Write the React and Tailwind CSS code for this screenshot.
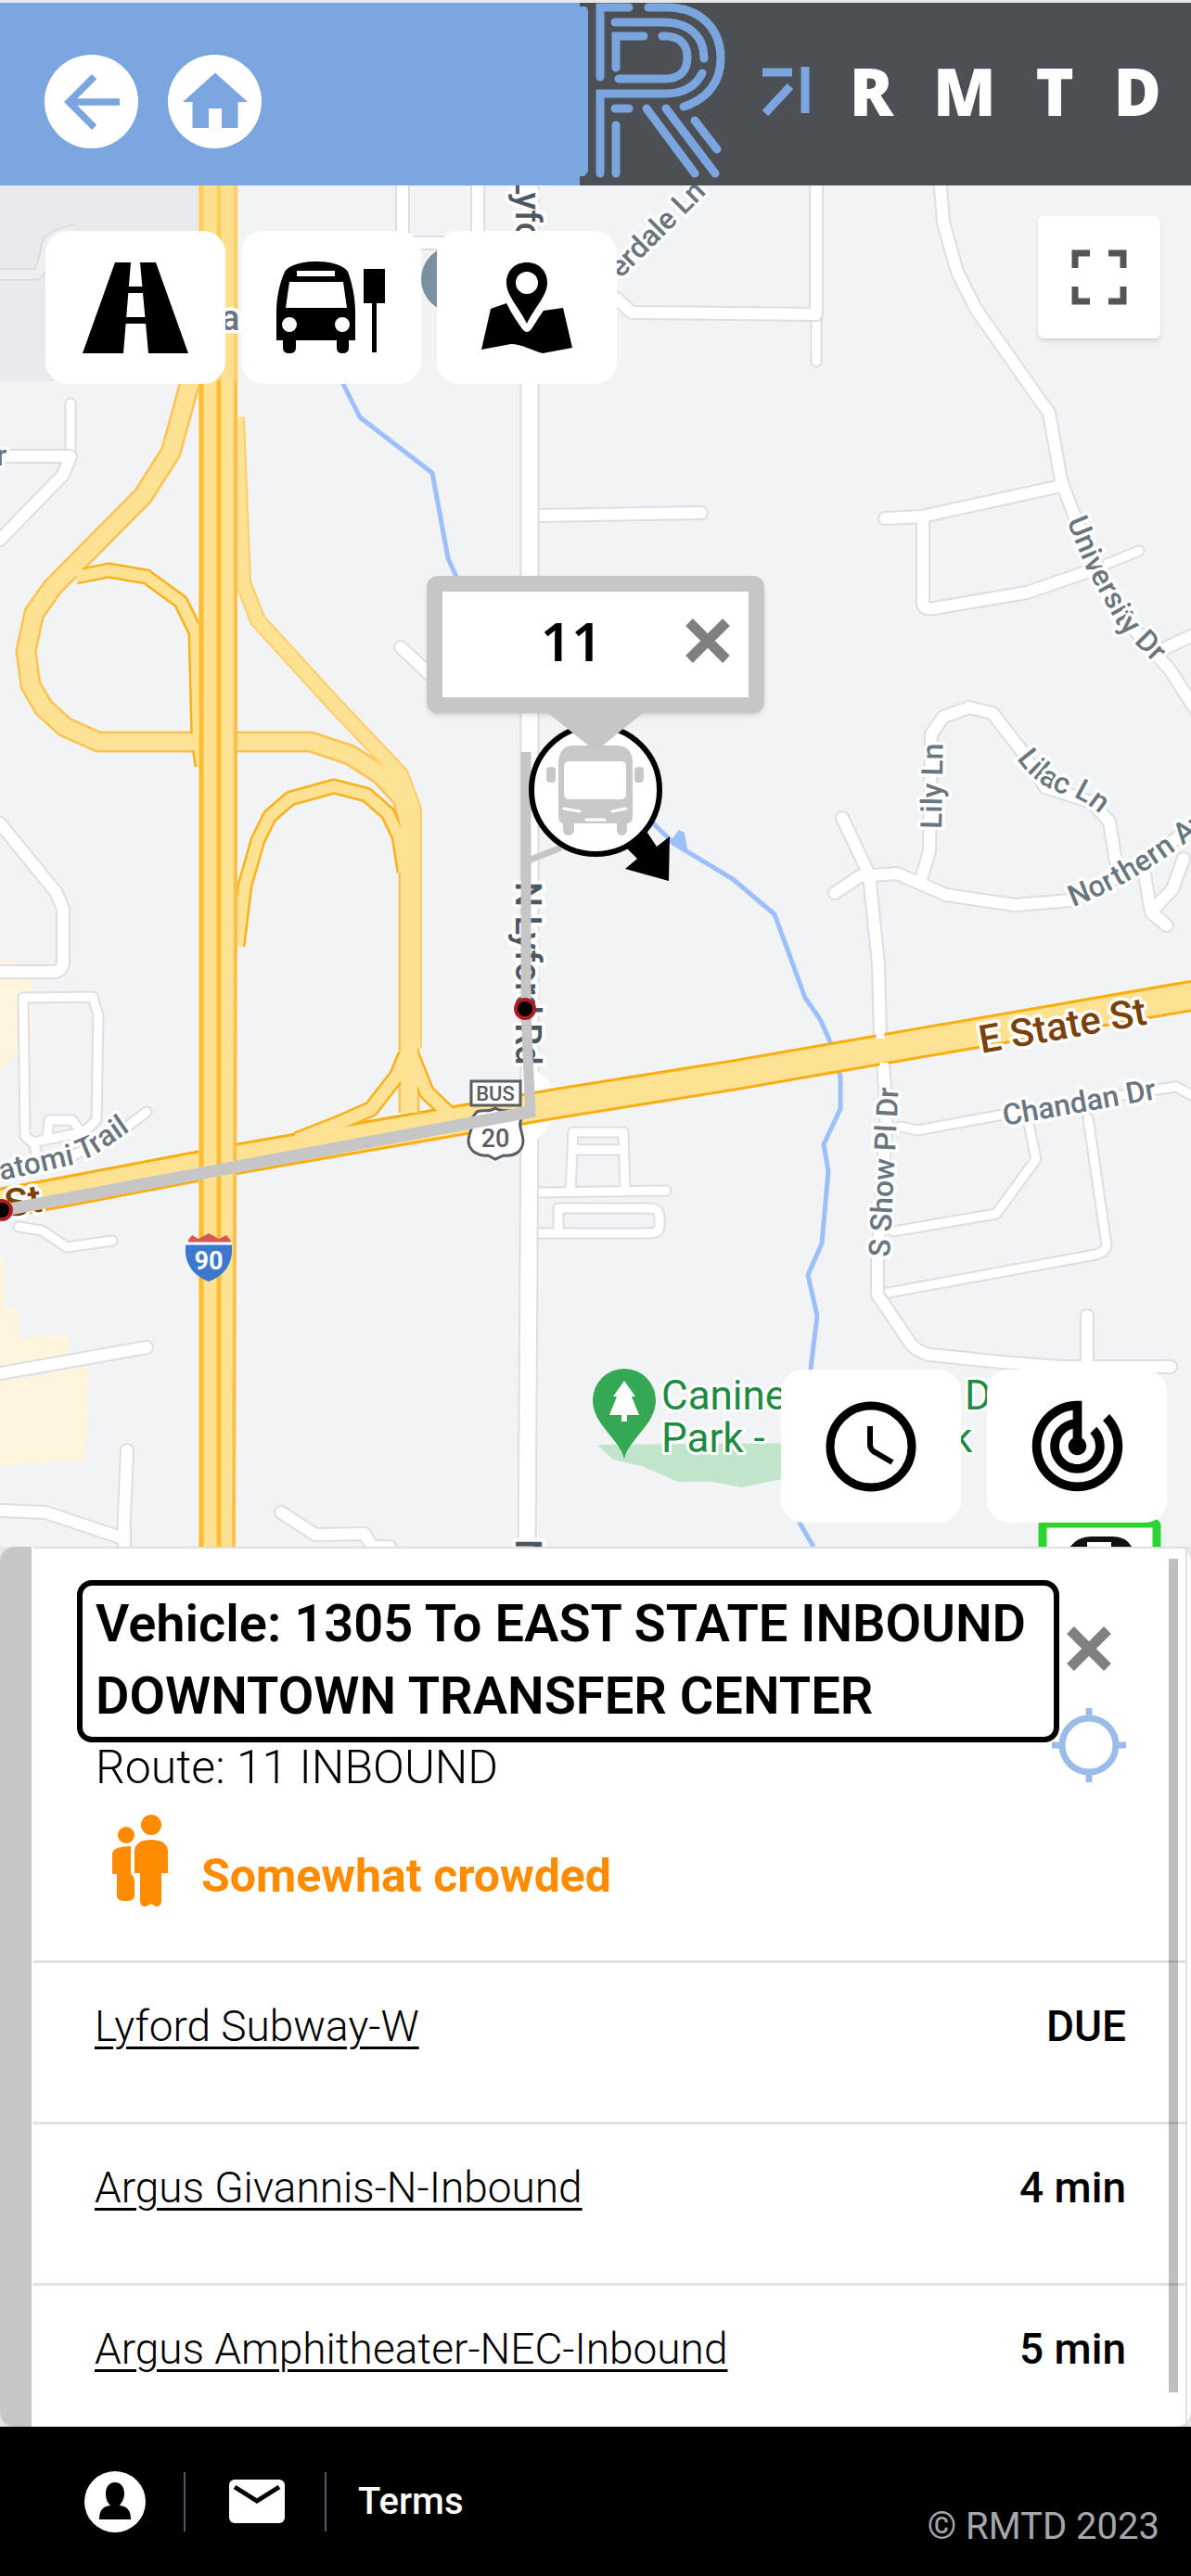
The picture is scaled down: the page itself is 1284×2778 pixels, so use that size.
import React, { useState } from "react";
import { MdArrowBack, MdHome, MdTrackChanges } from "react-icons/md";

const STOPS = [
  { id: 1, name: "Lyford Subway-W", eta: "DUE" },
  { id: 2, name: "Argus Givannis-N-Inbound", eta: "4 min" },
  { id: 3, name: "Argus Amphitheater-NEC-Inbound", eta: "5 min" }
];

// Local streets, widest first
const WIDE_ROADS = [
  "M571 190V1190L568 1680"
];

const LOCAL_ROADS = [
  "M1013 190L1017 240L1032 293L1052 333L1120 430L1131 445L1144 518L1157 553L1206 660L1261 722L1290 767",
  "M954 559L994 557L1144 524",
  "M995 559V650Q995 658 1007 656L1107 639L1174 616",
  "M1254 700L1290 683",
  "M994 945L1002 918L1004 792L1017 773L1045 763L1070 769L1100 808L1127 849L1177 865L1196 886L1204 935",
  "M900 963L927 945L967 942L1020 965L1094 976L1154 971L1227 935L1290 888",
  "M908 882L937 943L947 1040L949 1120L952 1147L956 1200L946 1360V1396L981 1448Q988 1458 1003 1461L1080 1469L1142 1474H1262",
  "M1234 943L1241 984L1258 998M1276 926L1264 959L1244 980",
  "M1172 1419V1473",
  "M880 190V338M665 322L681 337L880 339",
  "M434 190V254Q434 262 446 262H515M515 190V270",
  "M76 492L68 512L0 582M0 492H76",
  "M0 888L61 963L68 980V1036Q68 1048 57 1048H0",
  "M0 1481L158 1453",
  "M0 1629L49 1631L133 1659L137 1564M134 1650V1680",
  "M303 1631L340 1655L393 1654L401 1668H420",
  "M432 698L463 727",
  "M579 556L756 553"
];

const THIN_ROADS = [
  "M76 435V492",
  "M1174 616L1228 594",
  "M880 338V390",
  "M971 1215L989 1219L1081 1202L1247 1175L1268 1172L1290 1184",
  "M1109 1212L1117 1250L1074 1309L963 1328",
  "M1173 1206L1193 1343Q1192 1350 1181 1353L947 1396",
  "M615 1284L618 1221H672L674 1284M617 1240H672M577 1286L718 1284",
  "M602 1330V1303H700Q711 1303 711 1312V1322Q711 1330 700 1330H577",
  "M27 1225L25 1076L100 1075L106 1095L104 1208L90 1221L35 1232Z",
  "M51 1225L53 1208H78L88 1222",
  "M0 1262L78 1246L120 1228L158 1199",
  "M20 1323L45 1327L72 1345L121 1338",
  "M36 1232L40 1245",
  "M442 1210L447 1230"
];

const RAMPS = [
  { d: "M207 405L184 488L154 535L57 633L37 661L28 702L33 739L47 763L70 784L106 800H335L377 814L410 835L434 861L441 890V1200", fill: 18, edge: 23, color: "#fac352" },
  { d: "M82 622L117 615L158 622L195 649L211 682L214 800L218 826", fill: 12, edge: 17, color: "#f9b11c" },
  { d: "M255 450L262 628L278 669L360 759L432 835L446 873V1130", fill: 14, edge: 18, color: "#fbce69" },
  { d: "M256 1020L264 955L278 906L291 880L313 861L360 848L395 857L418 877L430 902L436 940", fill: 12, edge: 17, color: "#f9b11c" },
  { d: "M437 1138L428 1160L400 1196L368 1210L320 1229", fill: 13, edge: 18, color: "#f9b11c" },
  { d: "M444 1138L460 1178L485 1202", fill: 13, edge: 18, color: "#f9b11c" }
];

const STATE_ST = "M-6 1299L65 1286L254 1250L600 1190L788 1160L949 1132L1290 1073";

const Roads = ({ paths, width }) => (
  <g fill="none" strokeLinecap="round" strokeLinejoin="round">
    {paths.map((d) => (
      <path key={d} d={d} stroke="#dcdee3" strokeWidth={width + 4} />
    ))}
    {paths.map((d) => (
      <path key={d} d={d} stroke="#ffffff" strokeWidth={width} />
    ))}
  </g>
);

const CityMap = () => (
  <svg
    className="absolute inset-0 h-full w-full"
    viewBox="0 200 1284 1468"
    preserveAspectRatio="xMidYMin slice"
    fontFamily="Roboto, sans-serif"
    role="img"
    aria-label="Map around E State St and N Lyford Rd"
  >
    <rect x="0" y="200" width="1284" height="1500" fill="#f1f3f5" />
    <path d="M0 200H214V411H0Z" fill="#e8eaed" />
    <g fill="#fef5dc">
      <path d="M0 1036L14 1036L35 1063V1119L0 1154Z" />
      <path d="M0 1355L4 1355V1410H20V1444L74 1438V1462L0 1478Z" />
      <path d="M0 1490L96 1473L92 1575L33 1579L0 1581Z" />
    </g>
    <path d="M644 1558L910 1556V1590L843 1595L799 1604L768 1598L731 1598L692 1581L661 1574Z" fill="#c1e5ca" />

    <g fill="none" stroke="#9cc0fa" strokeWidth="5" strokeLinejoin="round">
      <path d="M368 410L388 450L466 510L483 602L500 640M700 884L727 910L790 948L835 986L868 1076L884 1099L897 1128L906 1162V1196L888 1234L893 1263L886 1341L871 1375L881 1419L874 1476L862 1642L877 1668" />
    </g>
    <path d="M722 908L732 895L738 898L741 916Z" fill="#9cc0fa" />

    <path d="M0 296H39Q45 296 51 262Q53 254 82 248" fill="none" stroke="#d5d8dc" strokeWidth="13" />
    <path d="M0 296H39Q45 296 51 262Q53 254 82 248" fill="none" stroke="#eceef0" strokeWidth="10" />
    <Roads paths={THIN_ROADS} width={9} />
    <Roads paths={LOCAL_ROADS} width={12} />
    <Roads paths={WIDE_ROADS} width={17} />
    <path d="M579 1155L603 1176L600 1203L577 1232Z" fill="#ffffff" />

    <g fill="none" strokeLinejoin="round">
      <path d={STATE_ST} stroke="#f9ae12" strokeWidth="34" />
      {RAMPS.map((r) => (
        <path key={r.d} d={r.d} stroke={r.color} strokeWidth={r.edge} />
      ))}
      {RAMPS.map((r) => (
        <path key={r.d} d={r.d} stroke="#fde293" strokeWidth={r.fill} />
      ))}
      <path d={STATE_ST} stroke="#fde293" strokeWidth="28" />
    </g>

    {/* Interstate */}
    <path d="M214 200H256V700L253 1668H214Z" fill="#fde293" />
    <path d="M217 200V1668M236 200V1668" stroke="#fcbd35" strokeWidth="5" />
    <path d="M254 200V1000L252 1668" fill="none" stroke="#fac04a" strokeWidth="4" />
    <path d="M214 200H257V411H214Z" fill="#fbdd88" opacity="0.5" />
    <path d="M949 1112V1120M953 1146V1156" stroke="#ffffff" strokeWidth="9" />

    <circle cx="490" cy="301" r="36" fill="#7890a0" />

    {/* Street names */}
    <defs>
      <path id="university" d="M1150 562L1171 613L1206 676L1262 733" />
      <path id="lilac" d="M1096 818Q1118 850 1152 858Q1170 862 1200 890" />
      <path id="northern" d="M1157 978Q1230 950 1300 892" />
      <path id="potawatomi" d="M-42 1282L30 1267L78 1256L102 1246L160 1206" />
    </defs>
    <g fontSize="32" fontWeight="500" fill="#69757f" stroke="#ffffff" strokeWidth="7" strokeLinejoin="round" paintOrder="stroke">
      <text transform="translate(669 301) rotate(-45)">erdale Ln</text>
      <text><textPath href="#university">University Dr</textPath></text>
      <text transform="translate(1015 894) rotate(-89)">Lily Ln</text>
      <text><textPath href="#lilac">Lilac Ln</textPath></text>
      <text><textPath href="#northern">Northern Ave</textPath></text>
      <text transform="translate(1083 1214) rotate(-10)">Chandan Dr</text>
      <text transform="translate(959 1356) rotate(-87)">S Show Pl Dr</text>
      <text><textPath href="#potawatomi" startOffset="44">atomi Trail</textPath></text>
      <text x="-4" y="502">r</text>
      <text x="238" y="356" fontSize="38">a</text>
    </g>
    <g fontSize="38" fontWeight="500" fill="#4d5760" stroke="#ffffff" strokeWidth="8" strokeLinejoin="round" paintOrder="stroke">
      <text transform="translate(556 153) rotate(90)">N Lyford Rd</text>
      <text transform="translate(556 951) rotate(90)">N Lyford Rd</text>
      <text transform="translate(556 1660) rotate(90)">N Lyford Rd</text>
    </g>
    <g fontSize="42" fontWeight="500" fill="#7a4109" stroke="#ffffff" strokeWidth="7" strokeLinejoin="round" paintOrder="stroke">
      <text transform="translate(1058 1136) rotate(-10)">E State St</text>
      <text transform="translate(8 1313) rotate(-10)">St</text>
    </g>
    <g fontSize="44" fill="#1e8a42" stroke="#ffffff" strokeWidth="6" strokeLinejoin="round" paintOrder="stroke">
      <text x="713" y="1520">Canine</text>
      <text x="713" y="1566">Park -</text>
      <text x="1040" y="1520">D</text>
      <text x="1026" y="1566">k</text>
    </g>

    {/* Park marker */}
    <path d="M673 1573C668 1552 639 1536 639 1510A34 34 0 0 1 707 1510C707 1536 678 1552 673 1573Z" fill="#34a853" />
    <path d="M673 1489L685 1506H681L689 1526H676V1533H670V1526H657L665 1506H661Z" fill="#ffffff" />

    {/* Route shields */}
    <path d="M534 1195C528 1200 520 1196 514 1199L508 1207C512 1214 505 1221 505 1231C506 1243 518 1247 526 1246L534 1250L543 1246C554 1247 563 1243 564 1231C564 1221 558 1214 562 1207L555 1199C548 1196 540 1200 534 1195Z" fill="#ffffff" stroke="#595e62" strokeWidth="3" />
    <path d="M203 1337L207 1332L214 1336L225 1330L236 1336L244 1332L249 1338V1340H203Z" fill="#d8565a" />
    <path d="M200 1340H250V1352C248 1368 238 1377 225 1382C212 1377 202 1368 200 1352Z" fill="#3b78ce" />
    <path d="M200 1341H250" stroke="#ffffff" strokeWidth="3" />
    <g textAnchor="middle">
      <text x="534" y="1237" fontSize="27" fontWeight="500" fill="#595e62">20</text>
      <text x="225" y="1369" fontSize="27" fontWeight="700" fill="#ffffff">90</text>
    </g>

    {/* Bus route and its stops */}
    <path d="M567 811V1090L570 1160L572 1198" fill="none" stroke="#c6c6c6" strokeWidth="11" />
    <path d="M567 929L605 914" stroke="#c6c6c6" strokeWidth="7" />
    <path d="M-6 1307L577 1198" stroke="#c6c6c6" strokeWidth="13" />
    <circle cx="566" cy="1088" r="10" fill="#000000" stroke="#b01c22" strokeWidth="4" />
    <circle cx="2" cy="1305" r="10" fill="#000000" stroke="#b01c22" strokeWidth="4" />
    <rect x="508" y="1166" width="53" height="26" fill="#ffffff" stroke="#595e62" strokeWidth="3" />
    <text x="534" y="1187" fontSize="22" fontWeight="500" fill="#595e62" textAnchor="middle">BUS</text>

    {/* Selected vehicle */}
    <path d="M722 902L721 950L674 937L687 926L675 914L696 895L708 913Z" fill="#000000" />
    <circle cx="642" cy="852" r="69" fill="#ffffff" stroke="#000000" strokeWidth="6" />
    <g fill="#c8c8c8">
      <path d="M602 822Q603 804 618 804H665Q681 804 682 822V880Q682 888 676 888V894Q676 901 670 901Q665 901 665 894V888H619V894Q619 901 613 901Q607 901 607 894V888Q602 888 602 880Z" />
      <rect x="589" y="827" width="10" height="17" rx="4" />
      <rect x="684" y="827" width="10" height="17" rx="4" />
    </g>
    <rect x="608" y="821" width="67" height="41" rx="5" fill="#ffffff" />
    <path d="M608 872L625 875M675 872L660 875M632 884H652" stroke="#ffffff" strokeWidth="3" strokeLinecap="round" />

    {/* Stop marker partly under the panel */}
    <rect x="1124" y="1643" width="123" height="120" rx="2" fill="#ffffff" stroke="#2bd52f" strokeWidth="9" />
    <path d="M1151 1700V1672Q1160 1657 1176 1657H1200Q1216 1657 1222 1672V1700Z" fill="#111111" />
    <rect x="1172" y="1663" width="26" height="8" fill="#ffffff" />
  </svg>
);

const RoadIcon = () => (
  <svg className="h-[98px] w-[114px]" viewBox="0 0 114 98" aria-hidden="true">
    <path d="M35 0H52L44 98H0ZM62 0H79L114 98H71Z" />
    <path d="M48 26H66V33H48ZM46 59H68V66H46Z" />
  </svg>
);

const BusStopIcon = () => (
  <svg className="h-[100px] w-[118px]" viewBox="0 0 118 100" aria-hidden="true">
    <path
      fillRule="evenodd"
      d="M43 0C56 0 72 3 77 11C82 24 85 40 85 54V85H78V93Q78 99 71 99Q65 99 65 93V85H21V93Q21 99 14 99Q7 99 7 93V85H0V54C0 40 3 24 9 11C14 3 30 0 43 0ZM22 10V16H63V10ZM14 22L10 50H76L72 22ZM14 60A8 8 0 1 0 14 76A8 8 0 1 0 14 60ZM71 60A8 8 0 1 0 71 76A8 8 0 1 0 71 60Z"
    />
    <path d="M94 8H117V45H94ZM103 45H108V98H103Z" />
  </svg>
);

const MapPinIcon = () => (
  <svg className="h-[98px] w-[100px]" viewBox="0 0 100 98" aria-hidden="true">
    <path
      fillRule="evenodd"
      d="M50 0C63 0 72 9 72 22C72 36 58 49 50 66C42 49 28 36 28 22C28 9 37 0 50 0ZM50 10A12 12 0 1 0 50 34A12 12 0 1 0 50 10Z"
    />
    <path d="M11 50L28 44C34 56 40 65 46 73Q50 77 54 73C59 66 62 60 68 52L89 49L99 92L67 98C56 95 44 88 33 88L1 94Z" />
  </svg>
);

const ClockIcon = () => (
  <svg className="size-[98px]" viewBox="0 0 98 98" fill="none" stroke="#000000" aria-hidden="true">
    <circle cx="49" cy="49" r="44" strokeWidth="9" />
    <path d="M48 27V48Q49 53 53 55L72 66" strokeWidth="6" />
  </svg>
);

const CloseIcon = () => (
  <svg className="size-12" viewBox="0 0 48 48" stroke="#808080" strokeWidth="11" aria-hidden="true">
    <path d="M4 4L44 44M44 4L4 44" />
  </svg>
);

const LocateIcon = () => (
  <svg className="size-20" viewBox="0 0 80 80" fill="none" stroke="#9bbbe8" strokeWidth="7" aria-hidden="true">
    <circle cx="40" cy="40" r="29" />
    <path d="M40 0V11M40 69V80M0 40H11M69 40H80" />
  </svg>
);

const PeopleIcon = () => (
  <svg className="h-[100px] w-[60px]" viewBox="0 0 60 100" fill="#ff8c00" aria-hidden="true">
    <circle cx="15" cy="22" r="9" />
    <path d="M0 42Q1 34 20 34V64Q24 66 24 72V88Q24 93 14 93Q5 93 5 88V64H0Z" />
    <circle cx="42" cy="11" r="11" />
    <path d="M24 38Q26 27 42 27Q58 27 60 38V63H53V93Q53 99 47 99L42 96L36 99Q30 99 30 93V63H24Z" />
  </svg>
);

const UserIcon = () => (
  <svg className="size-[66px]" viewBox="0 0 66 66" aria-hidden="true">
    <circle cx="33" cy="33" r="33" fill="#ffffff" />
    <path d="M33 12C40 12 43 18 43 24C43 30 40 34 38 37C46 38 50 42 50 52H16C16 42 20 38 28 37C25 34 23 30 23 24C23 18 26 12 33 12Z" fill="#000000" />
  </svg>
);

const MailIcon = () => (
  <svg className="h-[47px] w-[60px]" viewBox="0 0 60 47" aria-hidden="true">
    <rect width="60" height="47" rx="6" fill="#ffffff" />
    <path d="M6 8L30 23L54 8" fill="none" stroke="#000000" strokeWidth="5" />
  </svg>
);

const LogoMark = () => (
  <svg className="h-[197px] w-[160px] shrink-0" viewBox="0 0 160 197" fill="none" stroke="#7ba5de" strokeWidth="9" aria-hidden="true">
    <path d="M0 4L7 4L9 8V182L5 187H0Z" fill="#7ba5de" stroke="none" />
    <g strokeLinejoin="miter" strokeLinecap="round">
      <path d="M22 80V5H53M74 5H94C130 5 152 28 152 60C152 86 137 104 112 112" />
      <path d="M38 21H90C118 21 134 36 134 60" />
      <path d="M39 70V36H69M89 36H92C108 36 116 45 116 59C116 73 108 82 92 82H42" />
      <path d="M132 76C125 90 113 98 92 98H22V184" />
      <path d="M38 114H53M39 132V184M72 114L124 184M93 114L146 184M124 127L148 158" />
    </g>
  </svg>
);

const LogoArrow = () => (
  <svg className="h-[54px] w-[52px] shrink-0" viewBox="0 0 52 54" fill="none" stroke="#7ba5de" strokeWidth="9" aria-hidden="true">
    <path d="M1 7H33M47 1V51M4 51L31 22" />
  </svg>
);

const MapButton = ({ label, children }) => (
  <button
    type="button"
    aria-label={label}
    className="flex h-[165px] w-[194px] items-center justify-center rounded-3xl bg-white"
  >
    {children}
  </button>
);

const Header = () => (
  <header className="mt-[3px] flex h-[197px] items-center justify-between bg-[#7ba5de]">
    <nav className="flex gap-8 pl-12 pt-4">
      <button type="button" aria-label="Back" className="flex size-[101px] items-center justify-center rounded-full bg-white">
        <MdArrowBack className="size-[90px] text-[#7ba5de]" />
      </button>
      <button type="button" aria-label="Home" className="flex size-[101px] items-center justify-center rounded-full bg-white">
        <MdHome className="size-[84px] text-[#7ba5de]" />
      </button>
    </nav>
    <div className="flex h-full w-[659px] items-center bg-[#4c4f54]">
      <LogoMark />
      <div className="flex flex-1 items-center justify-between pr-8 pb-2 pl-9">
        <LogoArrow />
        {["R", "M", "T", "D"].map((letter) => (
          <span key={letter} className="font-['Open_Sans',sans-serif] text-[70px] leading-none font-extrabold text-white">
            {letter}
          </span>
        ))}
      </div>
    </div>
  </header>
);

const VehiclePopup = ({ route, onClose }) => (
  <div className="absolute top-[421px] left-1/2 -ml-[182px] w-[364px]">
    <div className="rounded-xl bg-[#c6c6c6] px-[17px] py-[17px] shadow-md">
      <div className="flex h-[114px] items-center bg-white pb-2">
        <span className="flex-1 pl-4 text-center font-['Noto_Sans',sans-serif] text-[58px] leading-none font-semibold text-black">{route}</span>
        <button type="button" aria-label="Close popup" onClick={onClose} className="mr-5">
          <CloseIcon />
        </button>
      </div>
    </div>
    <svg className="mx-auto h-10 w-[102px]" viewBox="0 0 102 40" aria-hidden="true">
      <path d="M0 0H102L55 38Q51 42 47 38Z" fill="#c6c6c6" />
    </svg>
  </div>
);

const VehiclePanel = ({ onClose }) => (
  <section className="relative flex rounded-2xl bg-white shadow">
    <div className="w-[34px] rounded-l-2xl bg-[#c6c6c6]" />
    <div className="mr-1 ml-0.5 flex-1 border-t-2 border-r-2 border-[#e0e0e0]">
      <div className="flex h-[444px] items-start pt-[34px] pl-[47px]">
        <div className="w-[1059px]">
          <h1 className="h-[175px] rounded-2xl border-[6px] border-black pt-0.5 pl-3.5 text-[56px] leading-[78px] font-semibold text-black">
            Vehicle: 1305 To EAST STATE INBOUND DOWNTOWN TRANSFER CENTER
          </h1>
          <p className="pl-5 text-[50px] leading-[54px] font-light text-black">Route: 11 INBOUND</p>
          <div className="flex items-center gap-9 pt-6 pl-[38px]">
            <PeopleIcon />
            <span className="pt-8 text-[50px] leading-[56px] font-bold text-[#ff8c00]">Somewhat crowded</span>
          </div>
        </div>
        <div className="-ml-2 flex flex-col items-center gap-10 pt-[50px]">
          <button type="button" aria-label="Close panel" onClick={onClose}>
            <CloseIcon />
          </button>
          <button type="button" aria-label="Center on vehicle">
            <LocateIcon />
          </button>
        </div>
      </div>
      <ul>
        {STOPS.map((stop) => (
          <li
            key={stop.id}
            className="flex h-[174px] items-start justify-between border-t-[3px] border-[#e0e0e0] pt-10 pr-[64px] pl-[66px] text-[46px] leading-[56px] text-black last:h-[155px]"
          >
            <a href="#stop" className="font-light underline decoration-[3px] underline-offset-[6px]">{stop.name}</a>
            <span className="font-medium">{stop.eta}</span>
          </li>
        ))}
      </ul>
    </div>
    <div className="absolute top-[13px] right-[14px] bottom-[37px] w-[10px] bg-black/25" />
  </section>
);

const Footer = () => (
  <footer className="flex h-[161px] justify-between bg-black pr-[34px] pl-[91px] text-[40px]">
    <div className="flex h-full items-center">
      <button type="button" aria-label="Account">
        <UserIcon />
      </button>
      <div className="mr-[47px] ml-[41px] h-16 w-0.5 bg-[#4d5a66]" />
      <button type="button" aria-label="Contact us">
        <MailIcon />
      </button>
      <div className="mr-[34px] ml-[43px] h-16 w-0.5 bg-[#4d5a66]" />
      <a href="#terms" className="font-medium text-white">Terms</a>
    </div>
    <span className="pt-[76px] leading-[64px] text-[#a3a7ab]">© RMTD 2023</span>
  </footer>
);

const App = () => {
  const [popupOpen, setPopupOpen] = useState(true);
  const [panelOpen, setPanelOpen] = useState(true);

  return (
    <div className="flex min-h-screen flex-col bg-[#e8e8e8] font-[Roboto,sans-serif]">
      <Header />

      <main className="relative min-h-[1000px] flex-1 overflow-hidden bg-[#f1f3f5]">
        <CityMap />

        <div className="absolute top-[49px] left-[49px] flex gap-[17px]">
          <MapButton label="Routes"><RoadIcon /></MapButton>
          <MapButton label="Stops"><BusStopIcon /></MapButton>
          <MapButton label="Places"><MapPinIcon /></MapButton>
        </div>

        <button
          type="button"
          aria-label="Toggle fullscreen"
          className="absolute top-[33px] right-[33px] flex size-[132px] items-center justify-center rounded-md bg-white shadow-md"
        >
          <svg className="size-[60px]" viewBox="0 0 60 60" fill="none" stroke="#555555" strokeWidth="7" aria-hidden="true">
            <path d="M4 20V4H20M40 4H56V20M56 40V56H40M20 56H4V40" />
          </svg>
        </button>

        {popupOpen && <VehiclePopup route="11" onClose={() => setPopupOpen(false)} />}

        <div className="absolute right-[26px] bottom-[26px] flex gap-7">
          <MapButton label="Schedule"><ClockIcon /></MapButton>
          <MapButton label="Track vehicles"><MdTrackChanges className="size-[117px]" /></MapButton>
        </div>
      </main>

      {panelOpen && <VehiclePanel onClose={() => setPanelOpen(false)} />}
      <Footer />
    </div>
  );
};

export default App;
